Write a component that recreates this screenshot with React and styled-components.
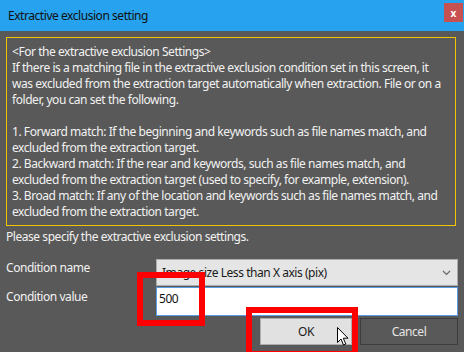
import React from 'react'
import styled, { createGlobalStyle } from 'styled-components'

const Global = createGlobalStyle`
  html, body { margin: 0; padding: 0; background: #595959; }
  * { box-sizing: border-box; }
`

const Window = styled.div`
  position: relative;
  width: 464px;
  height: 352px;
  overflow: hidden;
  background: #595959;
  font-family: "Noto Sans", "Open Sans", sans-serif;
  font-size: 12px;
  letter-spacing: -0.45px;
  color: #f2f2f2;
`

const TitleBar = styled.div`
  height: 31px;
  background: #27a2ee;
  display: flex;
  align-items: center;
  padding-left: 8px;
  color: #111;
  font-size: 12px;
`

const Title = styled.div`
  flex: 1;
  margin-top: -1px;
`

const CloseBtn = styled.div`
  width: 19px;
  height: 19px;
  margin: -6px 1px 0 0;
  background: #c75050;
  color: #fff;
  font-size: 10px;
  font-weight: bold;
  letter-spacing: 0;
  display: flex;
  align-items: center;
  justify-content: center;
`

const Body = styled.div`
  padding: 6px 6px 0 6px;
`

const InfoBox = styled.div`
  border: 1px solid #f2c500;
  width: 450px;
  padding: 6px 5px 5px 5px;
  line-height: 16px;
`

const Line = styled.div`
  white-space: nowrap;
  height: 16px;
`

const Prompt = styled.div`
  margin-top: 3px;
  line-height: 16px;
`

const Row = styled.div`
  display: flex;
  align-items: flex-start;
  margin-top: ${(p) => p.$top}px;
`

const Label = styled.div`
  width: 150px;
  padding-top: ${(p) => p.$pad}px;
  line-height: 16px;
`

const Combo = styled.div`
  flex: 1;
  height: 27px;
  background: #e5e5e5;
  border: 1px solid #acacac;
  display: flex;
  align-items: center;
  padding: 0 0 0 5px;
  color: #1a1a1a;
`

const ComboText = styled.div`
  flex: 1;
`

const Chevron = styled.svg`
  width: 9px;
  height: 6px;
  margin-right: 6px;
`

const Input = styled.div`
  flex: 1;
  height: 29px;
  background: #fff;
  border: 1px solid #569de5;
  padding: 2px 0 0 2px;
  color: #111;
  line-height: 18px;
`

const Buttons = styled.div`
  display: flex;
  justify-content: flex-end;
  gap: 8px;
  margin-top: 2px;
`

const Button = styled.div`
  width: ${(p) => p.$w}px;
  height: 27px;
  display: flex;
  align-items: center;
  justify-content: center;
  background: ${(p) => (p.$light ? '#e1e1e1' : '#595959')};
  border: 1px solid ${(p) => (p.$light ? '#adadad' : '#3d3d3d')};
  color: ${(p) => (p.$light ? '#1a1a1a' : '#e6e6e6')};
`

const Highlight = styled.div`
  position: absolute;
  left: ${(p) => p.$x}px;
  top: ${(p) => p.$y}px;
  width: ${(p) => p.$w}px;
  height: ${(p) => p.$h}px;
  border: 6px solid #ff0000;
  pointer-events: none;
`

const Cursor = styled.svg`
  position: absolute;
  left: 337px;
  top: 327px;
  width: 12px;
  height: 19px;
`

const lines = [
  '<For the extractive exclusion Settings>',
  'If there is a matching file in the extractive exclusion condition set in this screen, it',
  'was excluded from the extraction target automatically when extraction. File or on a',
  'folder, you can set the following.',
  '',
  '1. Forward match: If the beginning and keywords such as file names match, and',
  'excluded from the extraction target.',
  '2. Backward match: If the rear and keywords, such as file names match, and',
  'excluded from the extraction target (used to specify, for example, extension).',
  '3. Broad match: If any of the location and keywords such as file names match, and',
  'excluded from the extraction target.',
]

export default function App() {
  return (
    <>
      <Global />
      <Window>
        <TitleBar>
          <Title>Extractive exclusion setting</Title>
          <CloseBtn>x</CloseBtn>
        </TitleBar>
        <Body>
          <InfoBox>
            {lines.map((l, i) => (
              <Line key={i}>{l}</Line>
            ))}
          </InfoBox>
          <Prompt>Please specify the extractive exclusion settings.</Prompt>
          <Row $top={14}>
            <Label $pad={1}>Condition name</Label>
            <Combo>
              <ComboText>Image size Less than X axis (pix)</ComboText>
              <Chevron viewBox="0 0 9 6">
                <path d="M1 1 L4.5 4.5 L8 1" fill="none" stroke="#666" strokeWidth="1.2" />
              </Chevron>
            </Combo>
          </Row>
          <Row $top={1}>
            <Label $pad={2}>Condition value</Label>
            <Input>500</Input>
          </Row>
          <Buttons>
            <Button $light $w={92}>OK</Button>
            <Button $w={98}>Cancel</Button>
          </Buttons>
        </Body>
        <Highlight $x={137} $y={272} $w={68} $h={54} />
        <Highlight $x={246} $y={307} $w={112} $h={50} />
        <Cursor viewBox="0 0 12 19">
          <path d="M0.5 0.5 L0.5 15.5 L4 12 L6.5 18 L8.8 17 L6.3 11.2 L11 11.2 Z" fill="#fff" stroke="#000" strokeWidth="1" strokeLinejoin="miter" />
        </Cursor>
      </Window>
    </>
  )
}
